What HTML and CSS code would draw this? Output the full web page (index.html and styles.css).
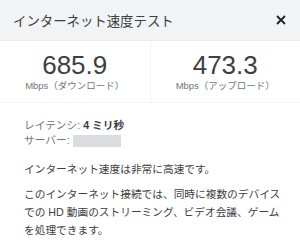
FILE: index.html
```html
<!DOCTYPE html>
<html lang="ja">
<head>
    <meta charset="UTF-8">
    <title>インターネット速度テスト</title>
    <link rel="stylesheet" href="styles.css">
</head>
<body>

    <!-- Header -->
    <div class="header">
        <span class="title">インターネット速度テスト</span>
        <span class="close">
            <svg width="10" height="10" viewBox="0 0 10 10"><path d="M1 1L9 9M9 1L1 9" stroke="#202124" stroke-width="1.8"/></svg>
        </span>
    </div>

    <!-- Speed results -->
    <div class="stats">
        <div class="stat">
            <div class="value">685.9</div>
            <div class="unit">Mbps（ダウンロード）</div>
        </div>
        <div class="stat">
            <div class="value">473.3</div>
            <div class="unit">Mbps（アップロード）</div>
        </div>
    </div>

    <!-- Details -->
    <div class="details">
        <div class="meta">
            <div>レイテンシ: <strong>4 ミリ秒</strong></div>
            <div>サーバー: <span class="hidden-server">1</span></div>
        </div>
        <p class="summary">インターネット速度は非常に高速です。</p>
        <p class="summary long">このインターネット接続では、同時に複数のデバイスでの HD 動画のストリーミング、ビデオ会議、ゲームを処理できます。</p>
    </div>

</body>
</html>
```

FILE: styles.css
```css
body {
    margin: 0;
    font-family: Arial, "Liberation Sans", "Noto Sans CJK JP", sans-serif;
    background-color: #fff;
    color: #202124;
    width: 300px;
}

.header {
    display: flex;
    justify-content: space-between;
    align-items: center;
    height: 40px;
    padding: 0 14px 0 13px;
    background-color: #f1f3f4;
    border-bottom: 1px solid #e8eaed;
}

.title {
    font-size: 13.4px;
    color: #3c4043;
}

.close {
    display: flex;
}

.stats {
    display: flex;
    border-bottom: 1px solid #f1f3f4;
}

.stat {
    flex: 1;
    text-align: center;
    padding: 9px 0 10px;
}

.stat + .stat {
    border-left: 1px solid #f1f3f4;
}

.value {
    font-size: 26px;
    line-height: 30px;
    color: #3c4043;
}

.unit {
    font-size: 9.5px;
    line-height: 12px;
    color: #70757a;
}

.details {
    padding: 15px 12px 0 24px;
    font-size: 10.7px;
}

.meta {
    color: #70757a;
    line-height: 15px;
}

.meta strong {
    color: #3c4043;
}

.hidden-server {
    display: inline-block;
    width: 48px;
    height: 12px;
    vertical-align: middle;
    background-color: #dadce0;
    color: transparent;
}

.summary {
    margin: 12px 0 0;
    line-height: 18px;
    color: #3c4043;
}

.summary.long {
    margin-top: 7px;
}
```
